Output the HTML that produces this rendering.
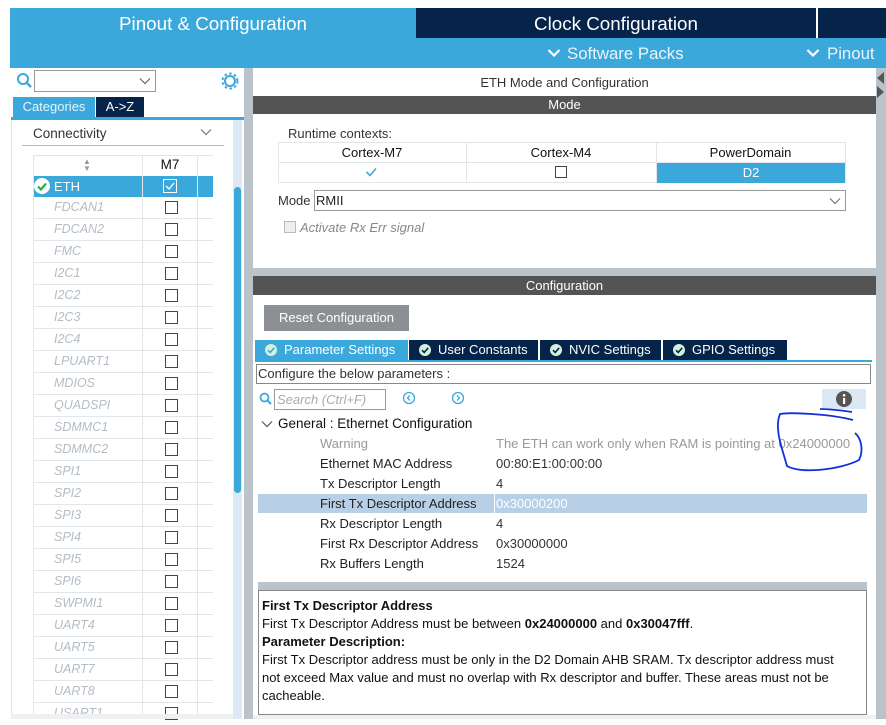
<!DOCTYPE html>
<html><head><meta charset="utf-8"><style>
*{margin:0;padding:0;box-sizing:border-box}
body{width:886px;height:719px;overflow:hidden;background:#fff;font-family:"Liberation Sans",sans-serif;font-size:12.5px;color:#222;position:relative}
div,span{position:absolute}
.c{text-align:center}
.row{left:33px;width:180px;height:22px;border-bottom:1px solid #e3e6e8}
.row .n{left:21px;top:3px;color:#b4bcc4;font-style:italic;font-size:12.5px}
.row .b{left:132px;top:4px;width:13px;height:13px;border:1px solid #444;background:#fff}
.vl{width:1px;background:#e3e6e8}
.lab{left:320px;color:#222;font-size:13px}
.val{left:496px;color:#333;font-size:13px}
.tab{top:340px;height:20px;background:#06234a;color:#fff;font-size:13px;line-height:20px;padding-left:29px}
.tab svg{position:absolute;left:10px;top:4px}
</style></head><body>
<div style="left:10px;top:8px;width:406px;height:60px;background:#3ba8dc"></div>
<div style="left:416px;top:8px;width:470px;height:30px;background:#06234a"></div>
<div style="left:816px;top:8px;width:2px;height:30px;background:#fff"></div>
<div style="left:416px;top:38px;width:470px;height:30px;background:#3ba8dc"></div>
<div style="left:10px;top:13px;width:406px;color:#fff;font-size:18.8px" class="c">Pinout &amp; Configuration</div>
<div style="left:416px;top:13px;width:400px;color:#fff;font-size:18.8px" class="c">Clock Configuration</div>
<svg style="position:absolute;left:547px;top:48px" width="14" height="10"><path d="M1.5 2l5.5 5.5L12.5 2" fill="none" stroke="#fff" stroke-width="2.2"/></svg>
<div style="left:567px;top:44px;color:#e8f4fb;font-size:16.8px">Software Packs</div>
<svg style="position:absolute;left:806px;top:48px" width="14" height="10"><path d="M1.5 2l5.5 5.5L12.5 2" fill="none" stroke="#fff" stroke-width="2.2"/></svg>
<div style="left:827px;top:44px;color:#e8f4fb;font-size:16.8px">Pinout</div>
<div style="left:244px;top:68px;width:9px;height:651px;background:#b9c3c9"></div>
<div style="left:876px;top:68px;width:10px;height:651px;background:#b9c3c9"></div>
<div style="left:877px;top:72px;width:0;height:0;border-top:6px solid transparent;border-bottom:6px solid transparent;border-right:7px solid #555"></div>
<div style="left:877px;top:86px;width:0;height:0;border-top:6px solid transparent;border-bottom:6px solid transparent;border-left:7px solid #555"></div>
<svg style="position:absolute;left:16px;top:72px" width="18" height="18"><circle cx="7" cy="7" r="5" fill="none" stroke="#3ba8dc" stroke-width="2"/><line x1="11" y1="11" x2="15" y2="15" stroke="#3ba8dc" stroke-width="2.5"/></svg>
<div style="left:34px;top:70px;width:122px;height:22px;border:1px solid #999"></div>
<svg style="position:absolute;left:139px;top:77px" width="12" height="8"><path d="M1 1.5l5 5 5-5" fill="none" stroke="#666" stroke-width="1.2"/></svg>
<svg style="position:absolute;left:221px;top:72px" width="18" height="18"><circle cx="9" cy="9" r="5" fill="none" stroke="#3ba8dc" stroke-width="2"/><circle cx="9" cy="9" r="7.5" fill="none" stroke="#3ba8dc" stroke-width="2" stroke-dasharray="2.5 2.4"/></svg>
<div style="left:13px;top:97px;width:82px;height:20px;background:#3ba8dc;color:#e8f4fb;line-height:20px;font-size:13px" class="c">Categories</div>
<div style="left:96px;top:97px;width:48px;height:20px;background:#06234a;color:#fff;line-height:20px;font-size:13px" class="c">A-&gt;Z</div>
<div style="left:11px;top:117px;width:233px;height:3px;background:#3ba8dc"></div>
<div style="left:11px;top:120px;width:233px;height:599px;border-left:1px solid #e3e6e8"></div>
<div style="left:33px;top:126px;color:#333;font-size:13.5px">Connectivity</div>
<svg style="position:absolute;left:200px;top:128px" width="12" height="8"><path d="M1 1.5l5 5 5-5" fill="none" stroke="#777" stroke-width="1.2"/></svg>
<div style="left:22px;top:145px;width:202px;height:1px;background:#bbb"></div>
<div style="left:233px;top:120px;width:9px;height:599px;background:#dce9f5"></div>
<div style="left:234px;top:187px;width:7px;height:306px;background:#3ba8dc;border-radius:4px"></div>
<div style="left:33px;top:155px;width:180px;height:1px;background:#e3e6e8"></div>
<div style="left:33px;top:155px;width:180px;height:22px;border-bottom:1px solid #e3e6e8"></div>
<div style="left:83px;top:158px;color:#999;font-size:8px;line-height:7px">&#9650;<br>&#9660;</div>
<div style="left:143px;top:157px;width:54px;color:#111;font-size:13.5px" class="c">M7</div>
<div style="left:33px;top:176px;width:180px;height:21px;background:#3ba8dc"></div>
<svg style="position:absolute;left:34px;top:178px" width="16" height="16"><circle cx="8" cy="8" r="8" fill="#fff"/><path d="M4 8.5l3 3 5-6" fill="none" stroke="#2eaa4a" stroke-width="2.2"/></svg>
<div style="left:54px;top:179px;color:#fff;font-size:13px">ETH</div>
<div style="left:163px;top:179px;width:14px;height:14px;border:1px solid #fff"></div>
<svg style="position:absolute;left:165px;top:181px" width="10" height="10"><path d="M1 5l3 3 5-6" fill="none" stroke="#fff" stroke-width="1.3"/></svg>
<div class="row" style="top:197px"><span class="n">FDCAN1</span><span class="b"></span></div>
<div class="row" style="top:219px"><span class="n">FDCAN2</span><span class="b"></span></div>
<div class="row" style="top:241px"><span class="n">FMC</span><span class="b"></span></div>
<div class="row" style="top:263px"><span class="n">I2C1</span><span class="b"></span></div>
<div class="row" style="top:285px"><span class="n">I2C2</span><span class="b"></span></div>
<div class="row" style="top:307px"><span class="n">I2C3</span><span class="b"></span></div>
<div class="row" style="top:329px"><span class="n">I2C4</span><span class="b"></span></div>
<div class="row" style="top:351px"><span class="n">LPUART1</span><span class="b"></span></div>
<div class="row" style="top:373px"><span class="n">MDIOS</span><span class="b"></span></div>
<div class="row" style="top:395px"><span class="n">QUADSPI</span><span class="b"></span></div>
<div class="row" style="top:417px"><span class="n">SDMMC1</span><span class="b"></span></div>
<div class="row" style="top:439px"><span class="n">SDMMC2</span><span class="b"></span></div>
<div class="row" style="top:461px"><span class="n">SPI1</span><span class="b"></span></div>
<div class="row" style="top:483px"><span class="n">SPI2</span><span class="b"></span></div>
<div class="row" style="top:505px"><span class="n">SPI3</span><span class="b"></span></div>
<div class="row" style="top:527px"><span class="n">SPI4</span><span class="b"></span></div>
<div class="row" style="top:549px"><span class="n">SPI5</span><span class="b"></span></div>
<div class="row" style="top:571px"><span class="n">SPI6</span><span class="b"></span></div>
<div class="row" style="top:593px"><span class="n">SWPMI1</span><span class="b"></span></div>
<div class="row" style="top:615px"><span class="n">UART4</span><span class="b"></span></div>
<div class="row" style="top:637px"><span class="n">UART5</span><span class="b"></span></div>
<div class="row" style="top:659px"><span class="n">UART7</span><span class="b"></span></div>
<div class="row" style="top:681px"><span class="n">UART8</span><span class="b"></span></div>
<div class="row" style="top:703px;border:none"><span class="n">USART1</span><span class="b"></span></div>
<div class="vl" style="left:33px;top:155px;height:560px"></div>
<div class="vl" style="left:142px;top:155px;height:560px"></div>
<div class="vl" style="left:197px;top:155px;height:560px"></div>
<div style="left:11px;top:714px;width:222px;height:5px;background:#eef0f1"></div>
<div style="left:253px;top:75px;width:623px;color:#333;font-size:13px" class="c">ETH Mode and Configuration</div>
<div style="left:253px;top:96px;width:623px;height:18px;background:#545454;color:#fff;line-height:18px;font-size:13px" class="c">Mode</div>
<div style="left:288px;top:126px;color:#333;font-size:13px">Runtime contexts:</div>
<div style="left:278px;top:142px;width:568px;height:41px;border:1px solid #e3e6e8"></div>
<div style="left:278px;top:162px;width:568px;height:1px;background:#e3e6e8"></div>
<div class="vl" style="left:466px;top:142px;height:41px"></div>
<div class="vl" style="left:656px;top:142px;height:41px"></div>
<div style="left:278px;top:145px;width:188px;color:#111;font-size:13px" class="c">Cortex-M7</div>
<div style="left:466px;top:145px;width:190px;color:#111;font-size:13px" class="c">Cortex-M4</div>
<div style="left:656px;top:145px;width:189px;color:#111;font-size:13px" class="c">PowerDomain</div>
<svg style="position:absolute;left:365px;top:166px" width="12" height="12"><path d="M1.5 6l3.5 3.5 6-7" fill="none" stroke="#3ba8dc" stroke-width="1.6"/></svg>
<div style="left:555px;top:166px;width:12px;height:12px;border:1px solid #444"></div>
<div style="left:657px;top:163px;width:188px;height:20px;background:#3ba8dc;color:#fff;line-height:20px;font-size:13px" class="c">D2</div>
<div style="left:278px;top:193px;color:#333;font-size:13px">Mode</div>
<div style="left:314px;top:190px;width:532px;height:21px;border:1px solid #999"></div>
<div style="left:316px;top:193px;color:#222;font-size:13px">RMII</div>
<svg style="position:absolute;left:829px;top:197px" width="12" height="8"><path d="M1 1.5l5 5 5-5" fill="none" stroke="#777" stroke-width="1.2"/></svg>
<div style="left:284px;top:221px;width:12px;height:12px;border:1px solid #bbb;background:#eee"></div>
<div style="left:300px;top:220px;color:#888;font-style:italic;font-size:13px">Activate Rx Err signal</div>
<div style="left:253px;top:268px;width:623px;height:8px;background:#b9c3c9"></div>
<div style="left:253px;top:276px;width:623px;height:19px;background:#545454;color:#fff;line-height:19px;font-size:13px" class="c">Configuration</div>
<div style="left:264px;top:305px;width:145px;height:26px;background:#8c9095;color:#fff;line-height:26px;font-size:13px" class="c">Reset Configuration</div>
<div class="tab" style="left:255px;width:153px;background:#3ba8dc"><svg width="12" height="12"><circle cx="6" cy="6" r="6" fill="#d6f0dc"/><path d="M3 6.2l2.2 2.2 4-4.5" fill="none" stroke="#3ba8dc" stroke-width="1.6"/></svg>Parameter Settings</div>
<div class="tab" style="left:409px;width:129px"><svg width="12" height="12"><circle cx="6" cy="6" r="6" fill="#d6f0dc"/><path d="M3 6.2l2.2 2.2 4-4.5" fill="none" stroke="#06234a" stroke-width="1.6"/></svg>User Constants</div>
<div class="tab" style="left:540px;width:121px"><svg width="12" height="12"><circle cx="6" cy="6" r="6" fill="#d6f0dc"/><path d="M3 6.2l2.2 2.2 4-4.5" fill="none" stroke="#06234a" stroke-width="1.6"/></svg>NVIC Settings</div>
<div class="tab" style="left:663px;width:124px"><svg width="12" height="12"><circle cx="6" cy="6" r="6" fill="#d6f0dc"/><path d="M3 6.2l2.2 2.2 4-4.5" fill="none" stroke="#06234a" stroke-width="1.6"/></svg>GPIO Settings</div>
<div style="left:255px;top:360px;width:617px;height:2px;background:#3ba8dc"></div>
<div style="left:256px;top:364px;width:615px;height:20px;border:1px solid #888;padding:1px 0 0 1px;color:#333;font-size:13px">Configure the below parameters :</div>
<svg style="position:absolute;left:259px;top:392px" width="14" height="14"><circle cx="5.5" cy="5.5" r="4" fill="none" stroke="#3ba8dc" stroke-width="1.8"/><line x1="8.5" y1="8.5" x2="12" y2="12" stroke="#3ba8dc" stroke-width="2"/></svg>
<div style="left:274px;top:389px;width:112px;height:21px;border:1px solid #999;color:#aaa;font-style:italic;padding:2px;font-size:13px">Search (Ctrl+F)</div>
<svg style="position:absolute;left:402px;top:391px" width="14" height="14"><circle cx="7" cy="7" r="5.5" fill="none" stroke="#3ba8dc" stroke-width="1.3"/><path d="M8 4.5L5.5 7 8 9.5" fill="none" stroke="#3ba8dc" stroke-width="1.3"/></svg>
<svg style="position:absolute;left:451px;top:391px" width="14" height="14"><circle cx="7" cy="7" r="5.5" fill="none" stroke="#3ba8dc" stroke-width="1.3"/><path d="M6 4.5L8.5 7 6 9.5" fill="none" stroke="#3ba8dc" stroke-width="1.3"/></svg>
<div style="left:822px;top:389px;width:44px;height:20px;background:#dce9f5"></div>
<svg style="position:absolute;left:835px;top:390px" width="18" height="18"><circle cx="9" cy="9" r="8" fill="#555"/><rect x="8" y="8" width="2.2" height="6" fill="#fff"/><circle cx="9.1" cy="5.3" r="1.3" fill="#fff"/></svg>
<svg style="position:absolute;left:261px;top:420px" width="12" height="8"><path d="M1 1.5l5 5 5-5" fill="none" stroke="#555" stroke-width="1.2"/></svg>
<div style="left:278px;top:416px;color:#111;font-size:13.5px">General : Ethernet Configuration</div>
<div class="lab" style="top:436px;color:#999">Warning</div>
<div class="val" style="top:436px;color:#999">The ETH can work only when RAM is pointing at 0x24000000</div>
<div class="lab" style="top:456px">Ethernet MAC Address</div><div class="val" style="top:456px">00:80:E1:00:00:00</div>
<div class="lab" style="top:476px">Tx Descriptor Length</div><div class="val" style="top:476px">4</div>
<div style="left:258px;top:494px;width:609px;height:19px;background:#b8d0e6"></div>
<div style="left:494px;top:494px;width:1px;height:19px;background:#fff"></div>
<div class="lab" style="top:496px">First Tx Descriptor Address</div><div class="val" style="top:496px;color:#fff">0x30000200</div>
<div class="lab" style="top:516px">Rx Descriptor Length</div><div class="val" style="top:516px">4</div>
<div class="lab" style="top:536px">First Rx Descriptor Address</div><div class="val" style="top:536px">0x30000000</div>
<div class="lab" style="top:556px">Rx Buffers Length</div><div class="val" style="top:556px">1524</div>
<div style="left:258px;top:582px;width:609px;height:9px;background:#b9c3c9"></div>
<div style="left:258px;top:590px;width:609px;height:125px;border:1px solid #888"></div>
<div style="left:262px;top:597px;line-height:18px;color:#111;width:590px;font-size:13px">
<b>First Tx Descriptor Address</b><br>First Tx Descriptor Address must be between <b>0x24000000</b> and <b>0x30047fff</b>.<br><b>Parameter Description:</b><br>First Tx Descriptor address must be only in the D2 Domain AHB SRAM. Tx descriptor address must not exceed Max value and must no overlap with Rx descriptor and buffer. These areas must not be cacheable.</div>
<div style="left:253px;top:715px;width:623px;height:4px;background:#eef0f1"></div>
<svg style="position:absolute;left:760px;top:400px" width="110" height="80"><path d="M93 20 C70 14 30 12 20 14 C14 28 22 48 27 66 C40 74 80 70 99 60 C104 50 101 38 95 33 M92 12 C80 10 65 9 60 9" fill="none" stroke="#1030e0" stroke-width="1.8"/></svg>
</body></html>
